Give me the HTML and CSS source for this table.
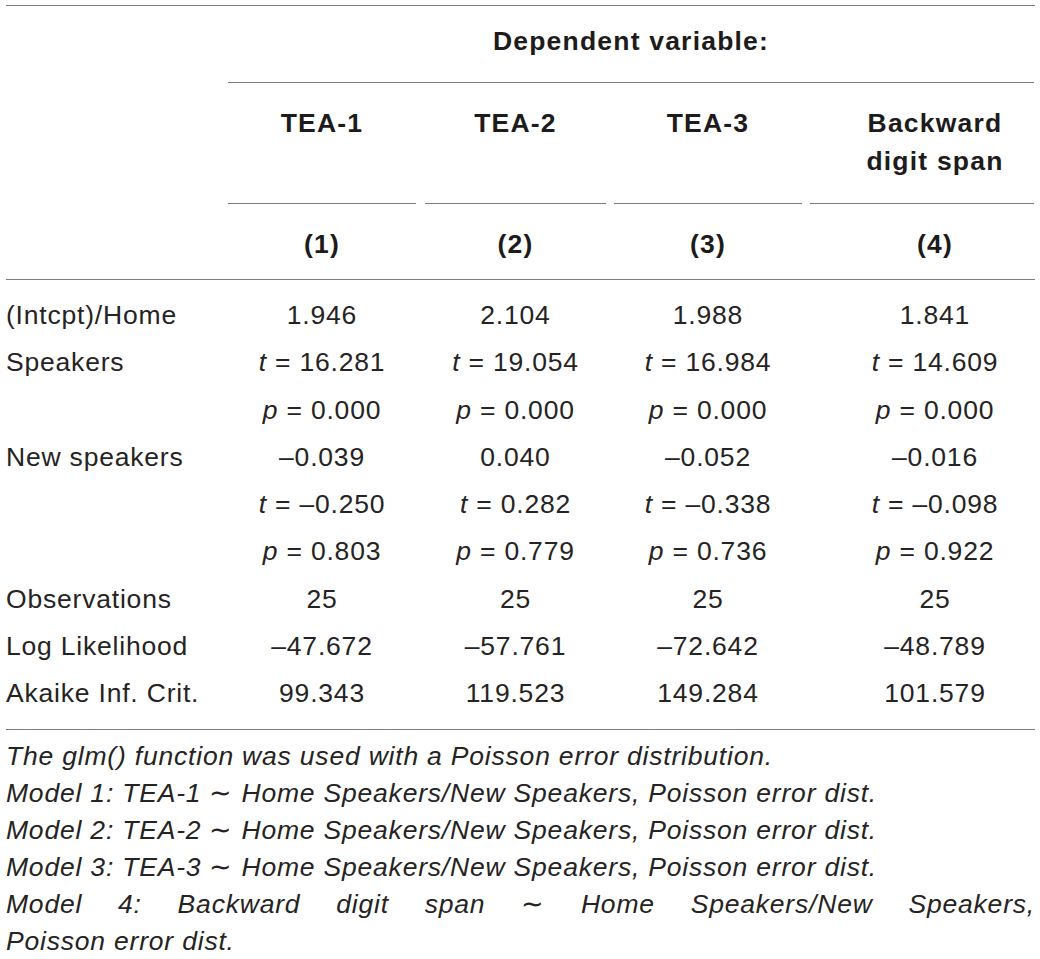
FILE: index.html
```html
<!DOCTYPE html>
<html lang="en">
<head>
<meta charset="utf-8">
<title>GLM results</title>
<link rel="stylesheet" href="styles.css">
</head>
<body>
<div class="table">
  <div class="row row-dep">
    <div class="stub"></div>
    <div class="dep">Dependent variable:</div>
  </div>
  <div class="row row-names">
    <div class="stub"></div>
    <div class="cell c1">TEA-1</div>
    <div class="cell c2">TEA-2</div>
    <div class="cell c3">TEA-3</div>
    <div class="cell c4">Backward<br>digit span</div>
  </div>
  <div class="row row-nums">
    <div class="stub"></div>
    <div class="cell c1">(1)</div>
    <div class="cell c2">(2)</div>
    <div class="cell c3">(3)</div>
    <div class="cell c4">(4)</div>
  </div>
  <div class="row body">
    <div class="label">(Intcpt)/Home</div>
    <div class="cell c1">1.946</div>
    <div class="cell c2">2.104</div>
    <div class="cell c3">1.988</div>
    <div class="cell c4">1.841</div>

    <div class="label">Speakers</div>
    <div class="cell c1"><i>t</i> = 16.281</div>
    <div class="cell c2"><i>t</i> = 19.054</div>
    <div class="cell c3"><i>t</i> = 16.984</div>
    <div class="cell c4"><i>t</i> = 14.609</div>

    <div class="label"></div>
    <div class="cell c1"><i>p</i> = 0.000</div>
    <div class="cell c2"><i>p</i> = 0.000</div>
    <div class="cell c3"><i>p</i> = 0.000</div>
    <div class="cell c4"><i>p</i> = 0.000</div>

    <div class="label">New speakers</div>
    <div class="cell c1">–0.039</div>
    <div class="cell c2">0.040</div>
    <div class="cell c3">–0.052</div>
    <div class="cell c4">–0.016</div>

    <div class="label"></div>
    <div class="cell c1"><i>t</i> = –0.250</div>
    <div class="cell c2"><i>t</i> = 0.282</div>
    <div class="cell c3"><i>t</i> = –0.338</div>
    <div class="cell c4"><i>t</i> = –0.098</div>

    <div class="label"></div>
    <div class="cell c1"><i>p</i> = 0.803</div>
    <div class="cell c2"><i>p</i> = 0.779</div>
    <div class="cell c3"><i>p</i> = 0.736</div>
    <div class="cell c4"><i>p</i> = 0.922</div>

    <div class="label">Observations</div>
    <div class="cell c1">25</div>
    <div class="cell c2">25</div>
    <div class="cell c3">25</div>
    <div class="cell c4">25</div>

    <div class="label">Log Likelihood</div>
    <div class="cell c1">–47.672</div>
    <div class="cell c2">–57.761</div>
    <div class="cell c3">–72.642</div>
    <div class="cell c4">–48.789</div>

    <div class="label">Akaike Inf. Crit.</div>
    <div class="cell c1">99.343</div>
    <div class="cell c2">119.523</div>
    <div class="cell c3">149.284</div>
    <div class="cell c4">101.579</div>
  </div>
  <div class="notes">
    <p>The glm() function was used with a Poisson error distribution.</p>
    <p>Model 1: TEA-1 <span class="tilde">∼</span> Home Speakers/New Speakers, Poisson error dist.</p>
    <p>Model 2: TEA-2 <span class="tilde">∼</span> Home Speakers/New Speakers, Poisson error dist.</p>
    <p>Model 3: TEA-3 <span class="tilde">∼</span> Home Speakers/New Speakers, Poisson error dist.</p>
    <p class="just">Model 4: Backward digit span <span class="tilde">∼</span> Home Speakers/New Speakers,</p>
    <p>Poisson error dist.</p>
  </div>
</div>
</body>
</html>
```

FILE: styles.css
```css
html, body {
  margin: 0;
  padding: 0;
  background: #ffffff;
}

body {
  font-family: "Liberation Sans", Arial, Helvetica, sans-serif;
  font-size: 26.5px;
  letter-spacing: 0.8px;
  color: #262324;
}

.table {
  margin: 5px 5px 0 6px;
  border-top: 1px solid #7d7d7d;
}

.row {
  display: grid;
  grid-template-columns: 222px 197px 189px 196px 225px;
}

.row-dep,
.row-names,
.row-nums {
  font-weight: bold;
  letter-spacing: 1.2px;
  line-height: 38px;
  color: #1e1b1c;
}

.dep {
  grid-column: 2 / 6;
  text-align: center;
  padding: 16px 0 22px;
  margin-right: 1px;
  border-bottom: 1px solid #7d7d7d;
}

.cell {
  text-align: center;
}

.c1 { margin-right: 9px; }
.c2 { margin-right: 8px; }
.c3 { margin-right: 8px; }
.c4 { margin-right: 1px; padding-left: 26px; }

.row-names .cell {
  padding-top: 21px;
  padding-bottom: 23px;
  border-bottom: 1px solid #7d7d7d;
}

.row-nums {
  border-bottom: 1px solid #7d7d7d;
}

.row-nums .cell {
  padding-top: 21px;
  padding-bottom: 16px;
}

.body {
  padding: 12px 0;
  line-height: 47.25px;
  border-bottom: 1px solid #7d7d7d;
}

.label {
  text-align: left;
  white-space: nowrap;
}

.body .cell {
  white-space: nowrap;
}

.notes {
  padding-top: 8px;
  font-style: italic;
  line-height: 37px;
}

.notes p {
  margin: 0;
}

.notes .just {
  text-align: justify;
  text-align-last: justify;
}

.tilde {
  font-style: normal;
}
```
